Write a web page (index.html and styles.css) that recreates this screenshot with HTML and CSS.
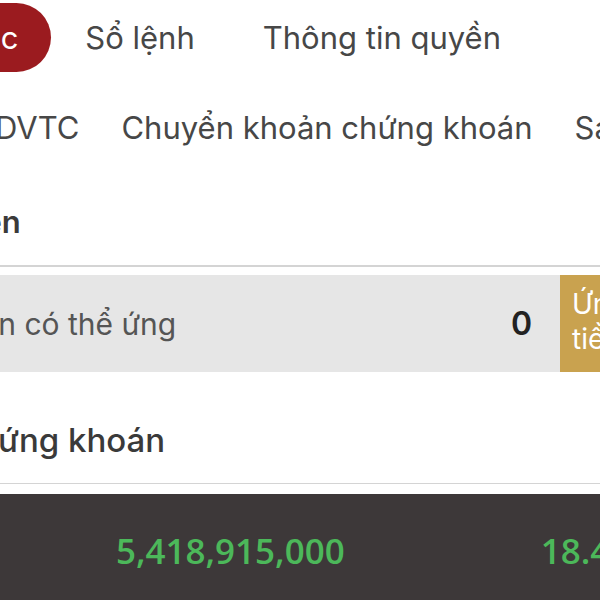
FILE: index.html
```html
<!DOCTYPE html>
<html lang="vi">
<head>
	<meta charset="UTF-8">
	<title>Tài sản</title>
	<link rel="stylesheet" href="styles.css">
</head>
<body>
	<ul class="tabs clear">
		<li class="tab on"><a href="javascript:;">Danh mục</a></li>
		<li class="tab"><a href="javascript:;">Sổ lệnh</a></li>
		<li class="tab"><a href="javascript:;">Thông tin quyền</a></li>
	</ul>
	<ul class="subtabs clear">
		<li class="first"><a href="javascript:;">Đăng ký DVTC</a></li>
		<li><a href="javascript:;">Chuyển khoản chứng khoán</a></li>
		<li><a href="javascript:;">Sao kê</a></li>
	</ul>

	<div class="block">
		<h2 class="title t1">Ứng trước tien</h2>
		<div class="adv">
			<span class="label">Số tiền có thể ứng</span>
			<span class="val">0</span>
			<a class="btn" href="javascript:;">Ứng<br>tiền</a>
		</div>
	</div>

	<div class="block">
		<h2 class="title t2">Tài sản chứng khoán</h2>
		<div class="sum">
			<span class="num n1">5,418,915,000</span>
			<span class="num n2">18.4%</span>
		</div>
	</div>
</body>
</html>
```

FILE: styles.css
```css
*{ margin: 0; padding: 0; list-style: none; text-decoration: none; box-sizing: border-box; }
html, body{ width: 600px; height: 600px; overflow: hidden; }
body{ background: #fff; font-family: Inter, "Noto Sans", sans-serif; color: #474747; }
a{ color: inherit; }

/* main tabs */
.tabs{ display: flex; white-space: nowrap; margin-top: 3px; }
.tab a{ display: block; height: 69px; line-height: 69px; padding: 0 34px; font-size: 31px; border-radius: 35px; }
.tab.on{ margin-left: -164px; }
.tab.on a{ background: #9b1b1f; color: #fff; padding-right: 33px; }

/* sub tabs */
.subtabs{ display: flex; gap: 42px; white-space: nowrap; margin-top: 28px; }
.subtabs li a{ display: block; height: 55px; line-height: 55px; font-size: 31px; }
.subtabs .first{ margin-left: -134px; }

.title{ font-size: 31px; font-weight: 600; color: #3a3a3a; line-height: 40px; white-space: nowrap; border-bottom: 2px solid #d4d4d4; }
.t1{ padding: 47px 0 23px; margin-left: -191px; }
.t2{ padding: 48px 0 23px; margin-left: -161px; font-size: 33px; font-weight: 500; border-bottom-width: 1px; }

/* advance row */
.adv{ display: flex; align-items: center; height: 97px; margin-top: 8px; background: #e6e6e6; }
.adv .label{ flex: 1; font-size: 30px; color: #555; white-space: nowrap; margin-left: -82px; }
.adv .val{ font-size: 32px; font-weight: 600; color: #222; margin-right: 28px; }
.adv .btn{ align-self: stretch; width: 90px; padding: 6px 12px 10px; background: #c9a24f; color: #fff; font-size: 28px; line-height: 35px; display: flex; flex-direction: column; justify-content: center; margin-right: -50px; }

/* summary bar */
.sum{ display: flex; align-items: center; height: 107px; margin-top: 10px; padding: 6px 0 0 116px; background: #3d3839; gap: 196px; white-space: nowrap; }
.num{ font-family: "Open Sans", "Noto Sans", sans-serif; font-weight: 600; font-size: 35px; color: #4cb85a; }
```
